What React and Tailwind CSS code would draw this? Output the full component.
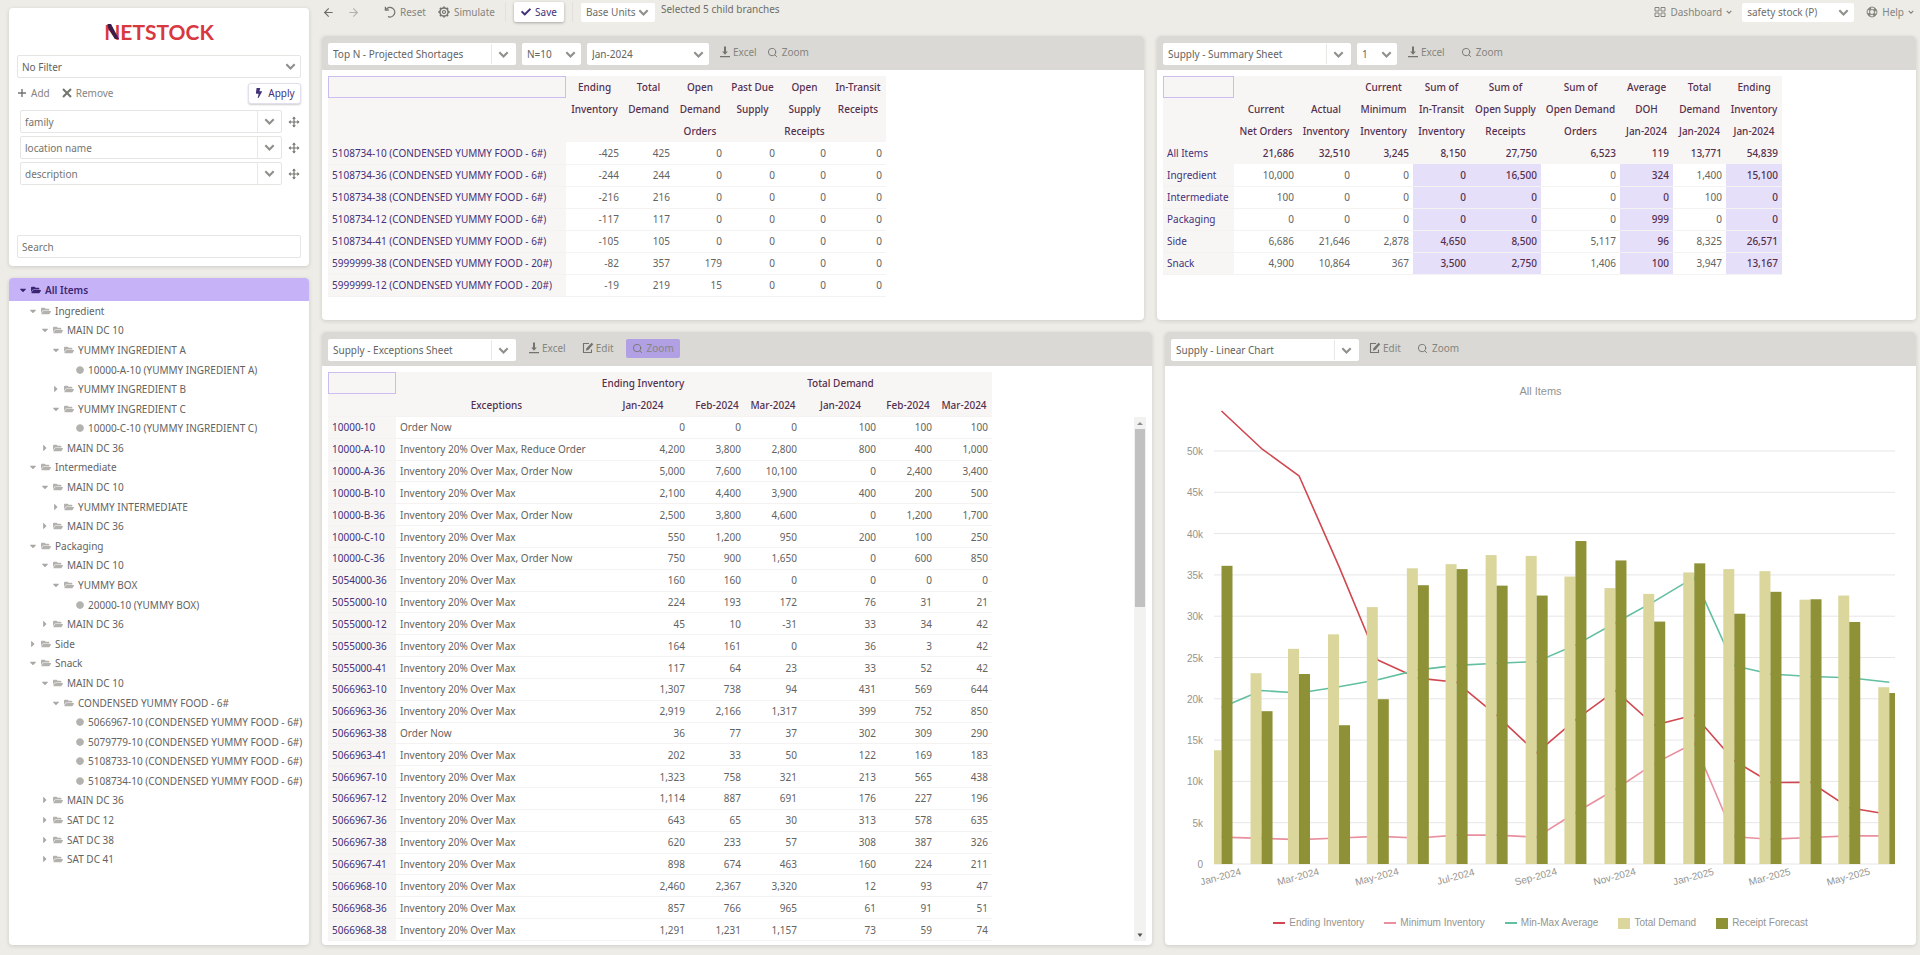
import React from "react";
import { FaFolderOpen, FaBolt, FaCaretDown, FaCaretRight, FaCheck, FaCircle } from "react-icons/fa";
import { FiSearch, FiArrowLeft, FiArrowRight } from "react-icons/fi";

/* ---------- icons ---------- */

function Chevron({ size = "h-[11px] w-[11px]" }) {
  return (
    <svg viewBox="0 0 10 10" className={size} fill="none" stroke="currentColor" strokeWidth="1.9" aria-hidden="true">
      <path d="M1.2 3 L5 6.9 L8.8 3" />
    </svg>
  );
}

function DownloadIcon() {
  return (
    <svg viewBox="0 0 12 12" className="h-3 w-3" fill="currentColor" aria-hidden="true">
      <path d="M5 0.5h2v5h1.8L6 8.8 3.2 5.5H5z" />
      <path d="M1 10h10v1.3H1z" />
    </svg>
  );
}

function EditIcon() {
  return (
    <svg viewBox="0 0 12 12" className="h-3 w-3" aria-hidden="true">
      <path d="M7 1.5H1.5v9h8V7.5" fill="none" stroke="currentColor" strokeWidth="1.1" />
      <path d="M9.6 0.8l1.7 1.5-5 5.6-2.4 0.9 0.6-2.5z" fill="currentColor" />
    </svg>
  );
}

function ResetIcon() {
  return (
    <svg viewBox="0 0 12 12" className="h-3 w-3" fill="none" stroke="currentColor" strokeWidth="1.3" aria-hidden="true">
      <path d="M2.2 3.2A4.8 4.8 0 1 1 4 10.6" />
      <path d="M1.4 0.8v3.2h3.4" />
    </svg>
  );
}

function GearIcon() {
  return (
    <svg viewBox="0 0 12 12" className="h-3 w-3" fill="none" stroke="currentColor" aria-hidden="true">
      <circle cx="6" cy="6" r="4.1" strokeWidth="1.5" />
      <circle cx="6" cy="6" r="1.5" strokeWidth="1.2" />
      <path d="M6 0.4v1.4M6 10.2v1.4M0.4 6h1.4M10.2 6h1.4M2 2l1 1M9 9l1 1M10 2L9 3M3 9l-1 1" strokeWidth="1.8" />
    </svg>
  );
}

function GridIcon() {
  return (
    <svg viewBox="0 0 12 12" className="h-3 w-3" fill="none" stroke="currentColor" strokeWidth="1" aria-hidden="true">
      <path d="M1 1.5h4v3.500H1zM7 1.500h4v3.500H7zM1 7h4v3.500H1zM7 7h4v3.500H7z" />
    </svg>
  );
}

function HelpIcon() {
  return (
    <svg viewBox="0 0 12 12" className="h-3 w-3" fill="none" stroke="currentColor" aria-hidden="true">
      <circle cx="6" cy="6" r="4.900" strokeWidth="1" />
      <circle cx="6" cy="6" r="2.500" strokeWidth="1" />
      <circle cx="6" cy="6" r="3.700" strokeWidth="2.400" strokeDasharray="2.900 2.900" strokeDashoffset="-1.500" />
    </svg>
  );
}

function MoveIcon() {
  return (
    <svg viewBox="0 0 12 12" className="h-3 w-3" aria-hidden="true">
      <path d="M6 1.500v9M1.500 6h9" stroke="currentColor" strokeWidth="1.2" />
      <path d="M6 0.500l1.900 2.200H4.100zM6 11.500l1.900-2.200H4.100zM0.500 6l2.200-1.900v3.800zM11.500 6L9.300 4.100v3.800z" fill="currentColor" />
    </svg>
  );
}

function PlusIcon() {
  return (
    <svg viewBox="0 0 10 10" className="h-2.5 w-2.5" fill="none" stroke="currentColor" strokeWidth="1.4" aria-hidden="true">
      <path d="M5 1v8M1 5h8" />
    </svg>
  );
}

function CrossIcon() {
  return (
    <svg viewBox="0 0 10 10" className="h-2.5 w-2.5" fill="none" stroke="currentColor" strokeWidth="2" aria-hidden="true">
      <path d="M1 1l8 8M9 1l-8 8" />
    </svg>
  );
}

function Logo() {
  return (
    <div className="flex h-[34px] items-center justify-center" role="img" aria-label="NETSTOCK">
      <div className="relative font-['Lato',sans-serif] text-[21px] leading-6 font-bold text-[#d8383f]">
        NETSTOCK
        <svg viewBox="0 0 16 15" className="absolute top-1 left-0 h-[15px] w-4" aria-hidden="true">
          <path d="M3.400 0h3.600L15 15h-4.200L4.200 4z" fill="#3b1d4a" />
        </svg>
      </div>
    </div>
  );
}

/* ---------- controls ---------- */

function Pick({ label, value, className = "", split = false, border = "border-transparent" }) {
  return (
    <div className={`relative shrink-0 rounded-[2px] border bg-white ${border} ${className}`}>
      <select
        aria-label={label}
        defaultValue={value}
        className="block h-full w-full appearance-none bg-transparent pr-4 pl-1 outline-none"
      >
        <option>{value}</option>
      </select>
      <span
        className={`pointer-events-none absolute inset-y-0 right-0 flex items-center justify-center text-[#8f8f8b] ${
          split ? "w-6 border-l border-[#e9e8e5]" : "w-5"
        }`}
      >
        <Chevron />
      </span>
    </div>
  );
}

function ToolButton({ icon, children, gap = "gap-1", className = "" }) {
  return (
    <button type="button" className={`flex items-center text-[#85857f] ${gap} ${className}`}>
      <span className="text-[11px] text-[#74746f]">{icon}</span>
      {children}
    </button>
  );
}

function Panel({ tools, children, className = "" }) {
  return (
    <section className={`flex min-w-0 flex-col overflow-hidden rounded-[4px] bg-white shadow-[0_1px_4px_rgba(0,0,0,0.14)] ${className}`}>
      <header className="flex h-[34px] shrink-0 items-center bg-[#dad9d5] px-1.5 pt-0.5">{tools}</header>
      {children}
    </section>
  );
}

/* ---------- sidebar ---------- */

const TREE = [
  [0, "open", "Ingredient"],
  [1, "open", "MAIN DC 10"],
  [2, "open", "YUMMY INGREDIENT A"],
  [3, "leaf", "10000-A-10 (YUMMY INGREDIENT A)"],
  [2, "closed", "YUMMY INGREDIENT B"],
  [2, "open", "YUMMY INGREDIENT C"],
  [3, "leaf", "10000-C-10 (YUMMY INGREDIENT C)"],
  [1, "closed", "MAIN DC 36"],
  [0, "open", "Intermediate"],
  [1, "open", "MAIN DC 10"],
  [2, "closed", "YUMMY INTERMEDIATE"],
  [1, "closed", "MAIN DC 36"],
  [0, "open", "Packaging"],
  [1, "open", "MAIN DC 10"],
  [2, "open", "YUMMY BOX"],
  [3, "leaf", "20000-10 (YUMMY BOX)"],
  [1, "closed", "MAIN DC 36"],
  [0, "closed", "Side"],
  [0, "open", "Snack"],
  [1, "open", "MAIN DC 10"],
  [2, "open", "CONDENSED YUMMY FOOD - 6#"],
  [3, "leaf", "5066967-10 (CONDENSED YUMMY FOOD - 6#)"],
  [3, "leaf", "5079779-10 (CONDENSED YUMMY FOOD - 6#)"],
  [3, "leaf", "5108733-10 (CONDENSED YUMMY FOOD - 6#)"],
  [3, "leaf", "5108734-10 (CONDENSED YUMMY FOOD - 6#)"],
  [1, "closed", "MAIN DC 36"],
  [1, "closed", "SAT DC 12"],
  [1, "closed", "SAT DC 38"],
  [1, "closed", "SAT DC 41"],
];

const INDENT = ["pl-5", "pl-8", "pl-[43px]", "pl-[67px]"];

function Sidebar() {
  return (
    <aside className="flex w-[300px] shrink-0 flex-col gap-3 pt-2">
      <div className="flex h-[258px] flex-col rounded-[4px] bg-white px-2 pt-[7px] pb-2 shadow-[0_1px_4px_rgba(0,0,0,0.14)]">
        <Logo />
        <Pick label="Filter" value="No Filter" border="border-[#e6e5e2]" className="mt-1.5 h-[23px]" />
        <div className="mt-1 flex h-[22px] items-center gap-3">
          <ToolButton icon={<PlusIcon />}>Add</ToolButton>
          <ToolButton icon={<CrossIcon />}>Remove</ToolButton>
          <button
            type="button"
            className="ml-auto flex h-[21px] w-[53px] items-center justify-center gap-1 rounded-[3px] border border-[#e2e0ec] bg-white text-[#43327a] shadow-[0_1px_2px_rgba(0,0,0,0.2)]"
          >
            <FaBolt className="text-[10px]" />
            Apply
          </button>
        </div>
        <ul className="mt-1.5 flex flex-col gap-[3px] pl-[3px]">
          {["family", "location name", "description"].map((name) => (
            <li key={name} className="flex items-center gap-1.5 text-[#74746f]">
              <Pick label={`Group by ${name}`} value={name} split border="border-[#e6e5e2]" className="h-[23px] w-[262px]" />
              <MoveIcon />
            </li>
          ))}
        </ul>
        <input
          type="search"
          aria-label="Search"
          placeholder="Search"
          className="mt-auto block h-[23px] w-full rounded-[2px] border border-[#e6e5e2] px-1 outline-none placeholder:text-[#74746f]"
        />
      </div>
      <nav aria-label="Items" className="flex-1 overflow-hidden rounded-[4px] bg-white shadow-[0_1px_4px_rgba(0,0,0,0.14)]">
        <button type="button" className="flex h-[23px] w-full items-center gap-1 bg-[#c6b3f7] pl-2.5 font-semibold text-[#3b2673]">
          <FaCaretDown className="w-2 text-[10px]" />
          <FaFolderOpen className="text-[10px]" />
          All Items
        </button>
        <ul className="grid h-[568px] auto-rows-fr text-[#63635f]">
          {TREE.map(([level, kind, label], i) => (
            <li key={i} className={`flex items-center gap-1 whitespace-nowrap ${INDENT[level]}`}>
              {kind === "leaf" ? (
                <FaCircle className="text-[8px] text-[#b3b2ae]" />
              ) : (
                <>
                  {kind === "open" ? (
                    <FaCaretDown className="w-2 text-[10px] text-[#a9a8a4]" />
                  ) : (
                    <FaCaretRight className="w-2 text-[10px] text-[#a9a8a4]" />
                  )}
                  <FaFolderOpen className="text-[10px] text-[#b3b2ae]" />
                </>
              )}
              {label}
            </li>
          ))}
        </ul>
      </nav>
    </aside>
  );
}

/* ---------- tables ---------- */

const CORNER = "h-[22px] border border-[#cdbcf0]";

function HeadLines({ lines }) {
  return lines.map((line, i) => (
    <span key={i} className="block">
      {line || "\u00a0"}
    </span>
  ));
}

const SHORTAGE_COLS = [
  ["w-[57px]", ["Ending", "Inventory", ""]],
  ["w-[51px]", ["Total", "Demand", ""]],
  ["w-[52px]", ["Open", "Demand", "Orders"]],
  ["w-[53px]", ["Past Due", "Supply", ""]],
  ["w-[51px]", ["Open", "Supply", "Receipts"]],
  ["w-[56px]", ["In-Transit", "Receipts", ""]],
];

const SHORTAGES = [
  ["5108734-10 (CONDENSED YUMMY FOOD - 6#)", "-425", "425", "0", "0", "0", "0"],
  ["5108734-36 (CONDENSED YUMMY FOOD - 6#)", "-244", "244", "0", "0", "0", "0"],
  ["5108734-38 (CONDENSED YUMMY FOOD - 6#)", "-216", "216", "0", "0", "0", "0"],
  ["5108734-12 (CONDENSED YUMMY FOOD - 6#)", "-117", "117", "0", "0", "0", "0"],
  ["5108734-41 (CONDENSED YUMMY FOOD - 6#)", "-105", "105", "0", "0", "0", "0"],
  ["5999999-38 (CONDENSED YUMMY FOOD - 20#)", "-82", "357", "179", "0", "0", "0"],
  ["5999999-12 (CONDENSED YUMMY FOOD - 20#)", "-19", "219", "15", "0", "0", "0"],
];

const SUMMARY_COLS = [
  ["w-[64px]", ["", "Current", "Net Orders"]],
  ["w-[56px]", ["", "Actual", "Inventory"]],
  ["w-[59px]", ["Current", "Minimum", "Inventory"]],
  ["w-[57px]", ["Sum of", "In-Transit", "Inventory"]],
  ["w-[71px]", ["Sum of", "Open Supply", "Receipts"]],
  ["w-[79px]", ["Sum of", "Open Demand", "Orders"]],
  ["w-[53px]", ["Average", "DOH", "Jan-2024"]],
  ["w-[53px]", ["Total", "Demand", "Jan-2024"]],
  ["w-[56px]", ["Ending", "Inventory", "Jan-2024"]],
];

const SUMMARY = [
  ["All Items", "21,686", "32,510", "3,245", "8,150", "27,750", "6,523", "119", "13,771", "54,839"],
  ["Ingredient", "10,000", "0", "0", "0", "16,500", "0", "324", "1,400", "15,100"],
  ["Intermediate", "100", "0", "0", "0", "0", "0", "0", "100", "0"],
  ["Packaging", "0", "0", "0", "0", "0", "0", "999", "0", "0"],
  ["Side", "6,686", "21,646", "2,878", "4,650", "8,500", "5,117", "96", "8,325", "26,571"],
  ["Snack", "4,900", "10,864", "367", "3,500", "2,750", "1,406", "100", "3,947", "13,167"],
];

const MARKED = [3, 4, 6, 8];

function PivotTable({ name, firstWidth, cols, rows, total = false, marked = [] }) {
  return (
    <table aria-label={name} className="m-1.5 w-max table-fixed border-collapse whitespace-nowrap">
      <colgroup>
        <col className={firstWidth} />
        {cols.map(([width], i) => (
          <col key={i} className={width} />
        ))}
      </colgroup>
      <thead>
        <tr className="bg-[#f8f6f5] leading-[22px] text-[#54304f]">
          <th scope="col" className="p-0 align-top">
            <span className={`block ${CORNER}`} />
          </th>
          {cols.map(([, lines], i) => (
            <th key={i} scope="col" className="p-0 text-center font-medium">
              <HeadLines lines={lines} />
            </th>
          ))}
        </tr>
      </thead>
      <tbody>
        {rows.map((row, r) => {
          const isTotal = total && r === 0;
          return (
            <tr key={row[0]} className={isTotal ? "h-[22px] bg-[#f8f6f5]" : "h-[22px] border-b border-[#f4f3f1]"}>
              <th scope="row" className="bg-[#f8f6f5] p-0 pl-1 text-left font-normal text-[#45307a]">
                {row[0]}
              </th>
              {row.slice(1).map((v, c) => {
                const on = !isTotal && marked.includes(c);
                return (
                  <td
                    key={c}
                    className={`p-0 pr-1 text-right ${
                      on ? "bg-[#e6dffa] font-medium text-[#54304f]" : isTotal ? "font-medium text-[#54304f]" : "text-[#63635f]"
                    }`}
                  >
                    {v}
                  </td>
                );
              })}
            </tr>
          );
        })}
      </tbody>
    </table>
  );
}

const MAX = "Inventory 20% Over Max";

const EXCEPTIONS = [
  ["10000-10", "Order Now", "0", "0", "0", "100", "100", "100"],
  ["10000-A-10", MAX + ", Reduce Order", "4,200", "3,800", "2,800", "800", "400", "1,000"],
  ["10000-A-36", MAX + ", Order Now", "5,000", "7,600", "10,100", "0", "2,400", "3,400"],
  ["10000-B-10", MAX, "2,100", "4,400", "3,900", "400", "200", "500"],
  ["10000-B-36", MAX + ", Order Now", "2,500", "3,800", "4,600", "0", "1,200", "1,700"],
  ["10000-C-10", MAX, "550", "1,200", "950", "200", "100", "250"],
  ["10000-C-36", MAX + ", Order Now", "750", "900", "1,650", "0", "600", "850"],
  ["5054000-36", MAX, "160", "160", "0", "0", "0", "0"],
  ["5055000-10", MAX, "224", "193", "172", "76", "31", "21"],
  ["5055000-12", MAX, "45", "10", "-31", "33", "34", "42"],
  ["5055000-36", MAX, "164", "161", "0", "36", "3", "42"],
  ["5055000-41", MAX, "117", "64", "23", "33", "52", "42"],
  ["5066963-10", MAX, "1,307", "738", "94", "431", "569", "644"],
  ["5066963-36", MAX, "2,919", "2,166", "1,317", "399", "752", "850"],
  ["5066963-38", "Order Now", "36", "77", "37", "302", "309", "290"],
  ["5066963-41", MAX, "202", "33", "50", "122", "169", "183"],
  ["5066967-10", MAX, "1,323", "758", "321", "213", "565", "438"],
  ["5066967-12", MAX, "1,114", "887", "691", "176", "227", "196"],
  ["5066967-36", MAX, "643", "65", "30", "313", "578", "635"],
  ["5066967-38", MAX, "620", "233", "57", "308", "387", "326"],
  ["5066967-41", MAX, "898", "674", "463", "160", "224", "211"],
  ["5066968-10", MAX, "2,460", "2,367", "3,320", "12", "93", "47"],
  ["5066968-36", MAX, "857", "766", "965", "61", "91", "51"],
  ["5066968-38", MAX, "1,291", "1,231", "1,157", "73", "59", "74"],
];

const EXCEPTION_COLS = ["w-[68px]", "w-[201px]", "w-[92px]", "w-[56px]", "w-[56px]", "w-[79px]", "w-[56px]", "w-[56px]"];

function ExceptionsTable() {
  return (
    <div className="flex flex-1 justify-between p-1.5 pb-1">
      <table aria-label="Exceptions" className="h-[569px] w-max table-fixed border-collapse whitespace-nowrap">
        <colgroup>
          {EXCEPTION_COLS.map((width, i) => (
            <col key={i} className={width} />
          ))}
        </colgroup>
        <thead className="bg-[#f8f6f5] leading-[22px] text-[#54304f]">
          <tr className="h-[22px]">
            <th className="p-0 align-top">
              <span className={`block ${CORNER}`} />
            </th>
            <th className="p-0" />
            <th className="p-0 text-center font-medium">Ending Inventory</th>
            <th className="p-0" />
            <th className="p-0" />
            <th className="p-0 text-center font-medium">Total Demand</th>
            <th className="p-0" />
            <th className="p-0" />
          </tr>
          <tr className="h-[22px] border-b border-[#f4f3f1]">
            {["", "Exceptions", "Jan-2024", "Feb-2024", "Mar-2024", "Jan-2024", "Feb-2024", "Mar-2024"].map((h, i) => (
              <th key={i} scope="col" className="p-0 text-center font-medium">
                {h}
              </th>
            ))}
          </tr>
        </thead>
        <tbody className="leading-4">
          {EXCEPTIONS.map(([item, note, ...values]) => (
            <tr key={item} className="border-b border-[#f4f3f1] text-[#63635f]">
              <th scope="row" className="bg-[#f8f6f5] p-0 pl-1 text-left font-normal text-[#45307a]">
                {item}
              </th>
              <td className="p-0 pl-1">{note}</td>
              {values.map((v, i) => (
                <td key={i} className="p-0 pr-1 text-right">
                  {v}
                </td>
              ))}
            </tr>
          ))}
        </tbody>
      </table>
      <div aria-hidden="true" className="mt-[45px] flex w-3 flex-col items-center bg-[#f2f2f1]">
        <svg viewBox="0 0 12 12" className="h-3 w-3" fill="#8f8f8f">
          <path d="M3 8L6 5l3 3z" />
        </svg>
        <div className="h-[178px] w-[10px] bg-[#c1c1c1]" />
        <svg viewBox="0 0 12 12" className="mt-auto h-3 w-3" fill="#505050">
          <path d="M3.500 4.500h5L6 8z" />
        </svg>
      </div>
    </div>
  );
}

/* ---------- chart ---------- */

const DAYS_IN_MONTH = [31, 29, 31, 30, 31, 30, 31, 31, 30, 31, 30, 31, 31, 28, 31, 30, 31];
const DAYS = DAYS_IN_MONTH.reduce((acc, d) => [...acc, acc[acc.length - 1] + d], [0]);

const DEMAND = [13.77, 23.1, 26.05, 27.8, 31.1, 35.8, 36.3, 37.4, 37.3, 34.8, 33.4, 32.7, 35.3, 35.7, 35.45, 32, 32.5, 21.4];
const RECEIPTS = [36.1, 18.5, 23, 16.8, 19.95, 33.75, 35.7, 33.7, 32.5, 39.1, 36.75, 29.35, 36.4, 30.3, 32.95, 32.05, 29.3, 20.7];
const ENDING = [54.84, 50.3, 47, 36, 24.7, 22.5, 22, 18, 13.45, 17.45, 21, 16.8, 18.05, 12.5, 9.87, 9.9, 6.8, 6];
const MINIMUM = [3.25, 3.1, 2.95, 3.15, 3.35, 3.15, 3.5, 3.5, 3.25, 6.2, 9.05, 12.15, 14.65, 3.3, 3, 3.2, 3.4, 3.4];
const AVERAGE = [18.95, 21, 20.7, 21.45, 22.3, 23.5, 24.05, 24.3, 24.5, 26.5, 29.2, 31.8, 34.7, 24, 23, 22.7, 22.55, 22];

const LABELS = ["Jan-2024", "Mar-2024", "May-2024", "Jul-2024", "Sep-2024", "Nov-2024", "Jan-2025", "Mar-2025", "May-2025"];

const LEFT = 49;
const RIGHT = 730;
const BASE = 459;
const BAR = 11;
const px = (i) => 56.5 + DAYS[i] * 1.2917;
const py = (v) => BASE - v * 8.26;
const points = (series) => series.map((v, i) => `${px(i)},${py(v)}`).join(" ");

function Chart() {
  return (
    <figure className="flex flex-1 flex-col items-center font-['Liberation_Sans',sans-serif] text-[#94948f]">
      <figcaption className="pt-4 pb-1 text-[11px] leading-[19px]">All Items</figcaption>
      <svg viewBox="0 0 751 500" className="w-full" role="img" aria-label="Supply linear chart">
        {[0, 5, 10, 15, 20, 25, 30, 35, 40, 45, 50].map((v) => (
          <g key={v}>
            <line x1={LEFT} x2={RIGHT} y1={py(v)} y2={py(v)} stroke="#e6e6e6" />
            <text x="38" y={py(v) + 4} textAnchor="end" fontSize="10" fill="#94948f">
              {v ? `${v}k` : "0"}
            </text>
          </g>
        ))}
        <g fill="none" strokeWidth="1.6" strokeLinejoin="round">
          <polyline points={points(ENDING)} stroke="#d0474f" />
          <polyline points={points(MINIMUM)} stroke="#e8909e" />
          <polyline points={points(AVERAGE)} stroke="#62bf9f" />
        </g>
        {DEMAND.map((v, i) => {
          const x = Math.max(px(i) - BAR, LEFT);
          return <rect key={i} x={x} y={py(v)} width={px(i) - x} height={BASE - py(v)} fill="#dad69c" />;
        })}
        {RECEIPTS.map((v, i) => (
          <rect key={i} x={px(i)} y={py(v)} width={Math.min(BAR, RIGHT - px(i))} height={BASE - py(v)} fill="#8e9136" />
        ))}
        {LABELS.map((label, i) => {
          const x = px(i * 2);
          return (
            <text key={label} x={x} y="475" textAnchor="middle" fontSize="10" fill="#94948f" transform={`rotate(-15 ${x} 475)`}>
              {label}
            </text>
          );
        })}
      </svg>
      <ul className="flex items-center gap-5 pt-2.5 text-[10px] leading-4">
        <li className="flex items-center gap-1">
          <span className="h-[2px] w-3 bg-[#d0474f]" />
          Ending Inventory
        </li>
        <li className="flex items-center gap-1">
          <span className="h-[2px] w-3 bg-[#e8909e]" />
          Minimum Inventory
        </li>
        <li className="flex items-center gap-1">
          <span className="h-[2px] w-3 bg-[#62bf9f]" />
          Min-Max Average
        </li>
        <li className="flex items-center gap-1">
          <span className="h-[11px] w-3 bg-[#dad69c]" />
          Total Demand
        </li>
        <li className="flex items-center gap-1">
          <span className="h-[11px] w-3 bg-[#8e9136]" />
          Receipt Forecast
        </li>
      </ul>
    </figure>
  );
}

/* ---------- page ---------- */

function Divider() {
  return <span className="h-5 w-px shrink-0 bg-[#e2e1dd]" />;
}

function TopBar() {
  return (
    <div className="flex h-6 items-center text-[#6e6e69]">
      <button type="button" aria-label="Back">
        <FiArrowLeft className="text-[13px]" />
      </button>
      <button type="button" aria-label="Forward" className="ml-3 text-[#b3b2ae]">
        <FiArrowRight className="text-[13px]" />
      </button>
      <span className="mr-3.5 ml-2.5">
        <Divider />
      </span>
      <ToolButton icon={<ResetIcon />}>Reset</ToolButton>
      <ToolButton icon={<GearIcon />} className="mr-2.5 ml-3">
        Simulate
      </ToolButton>
      <Divider />
      <button
        type="button"
        className="mx-2 flex h-5 w-[50px] items-center justify-center gap-1 rounded-[2px] bg-white text-[#43327a] shadow-[0_1px_3px_rgba(0,0,0,0.3)]"
      >
        <FaCheck className="text-[10px]" />
        Save
      </button>
      <Divider />
      <Pick label="Units" value="Base Units" className="mr-1.5 ml-2 h-[19px] w-[74px]" />
      <span className="mb-1.5">Selected 5 child branches</span>
      <button type="button" className="ml-auto flex items-center gap-1 text-[#85857f]">
        <GridIcon />
        Dashboard
        <Chevron size="h-1.5 w-1.5" />
      </button>
      <Pick label="Dashboard name" value="safety stock (P)" className="mr-3 ml-2.5 h-[19px] w-[112px]" />
      <button type="button" className="mr-0.5 flex items-center gap-1 text-[#85857f]">
        <HelpIcon />
        Help
        <Chevron size="h-1.5 w-1.5" />
      </button>
    </div>
  );
}

export default function App() {
  return (
    <div className="flex min-h-screen gap-[13px] bg-[#edece7] pr-1 pb-2.5 pl-[9px] font-['Noto_Sans',sans-serif] text-[10px] leading-4 text-[#63635f]">
      <Sidebar />
      <main className="flex min-w-0 flex-1 flex-col">
        <TopBar />
        <div className="mt-3 grid h-[284px] grid-cols-[822fr_759fr] gap-[13px]">
          <Panel
            tools={
              <>
                <Pick label="Sheet" value="Top N - Projected Shortages" split className="h-[22px] w-[188px]" />
                <Pick label="Rows" value="N=10" className="ml-1.5 h-[22px] w-[59px]" />
                <Pick label="Month" value="Jan-2024" className="ml-1.5 h-[22px] w-[122px]" />
                <ToolButton gap="gap-0.5" icon={<DownloadIcon />} className="mb-1 ml-2.5">Excel</ToolButton>
                <ToolButton gap="gap-1" icon={<FiSearch />} className="mb-1 ml-2.5">Zoom</ToolButton>
              </>
            }
          >
            <PivotTable name="Projected shortages" firstWidth="w-[238px]" cols={SHORTAGE_COLS} rows={SHORTAGES} />
          </Panel>
          <Panel
            tools={
              <>
                <Pick label="Sheet" value="Supply - Summary Sheet" split className="h-[22px] w-[188px]" />
                <Pick label="Depth" value="1" className="ml-1.5 h-[22px] w-10" />
                <ToolButton gap="gap-0.5" icon={<DownloadIcon />} className="mb-1 ml-2.5">Excel</ToolButton>
                <ToolButton gap="gap-1" icon={<FiSearch />} className="mb-1 ml-4">Zoom</ToolButton>
              </>
            }
          >
            <PivotTable name="Supply summary" firstWidth="w-[71px]" cols={SUMMARY_COLS} rows={SUMMARY} total marked={MARKED} />
          </Panel>
        </div>
        <div className="mt-3 grid flex-1 grid-cols-[830fr_751fr] gap-[13px]">
          <Panel
            tools={
              <>
                <Pick label="Sheet" value="Supply - Exceptions Sheet" split className="h-[22px] w-[188px]" />
                <ToolButton gap="gap-0.5" icon={<DownloadIcon />} className="mb-1 ml-3">Excel</ToolButton>
                <ToolButton gap="gap-0.5" icon={<EditIcon />} className="mb-1 ml-4">Edit</ToolButton>
                <ToolButton gap="gap-1" icon={<FiSearch />} className="mb-1 ml-3 h-[19px] rounded-[2px] bg-[#b2a0e4] px-1.5">Zoom</ToolButton>
              </>
            }
          >
            <ExceptionsTable />
          </Panel>
          <Panel
            tools={
              <>
                <Pick label="Sheet" value="Supply - Linear Chart" split className="h-[22px] w-[188px]" />
                <ToolButton gap="gap-0.5" icon={<EditIcon />} className="mb-1 ml-2.5">Edit</ToolButton>
                <ToolButton gap="gap-1" icon={<FiSearch />} className="mb-1 ml-4">Zoom</ToolButton>
              </>
            }
          >
            <Chart />
          </Panel>
        </div>
      </main>
    </div>
  );
}
